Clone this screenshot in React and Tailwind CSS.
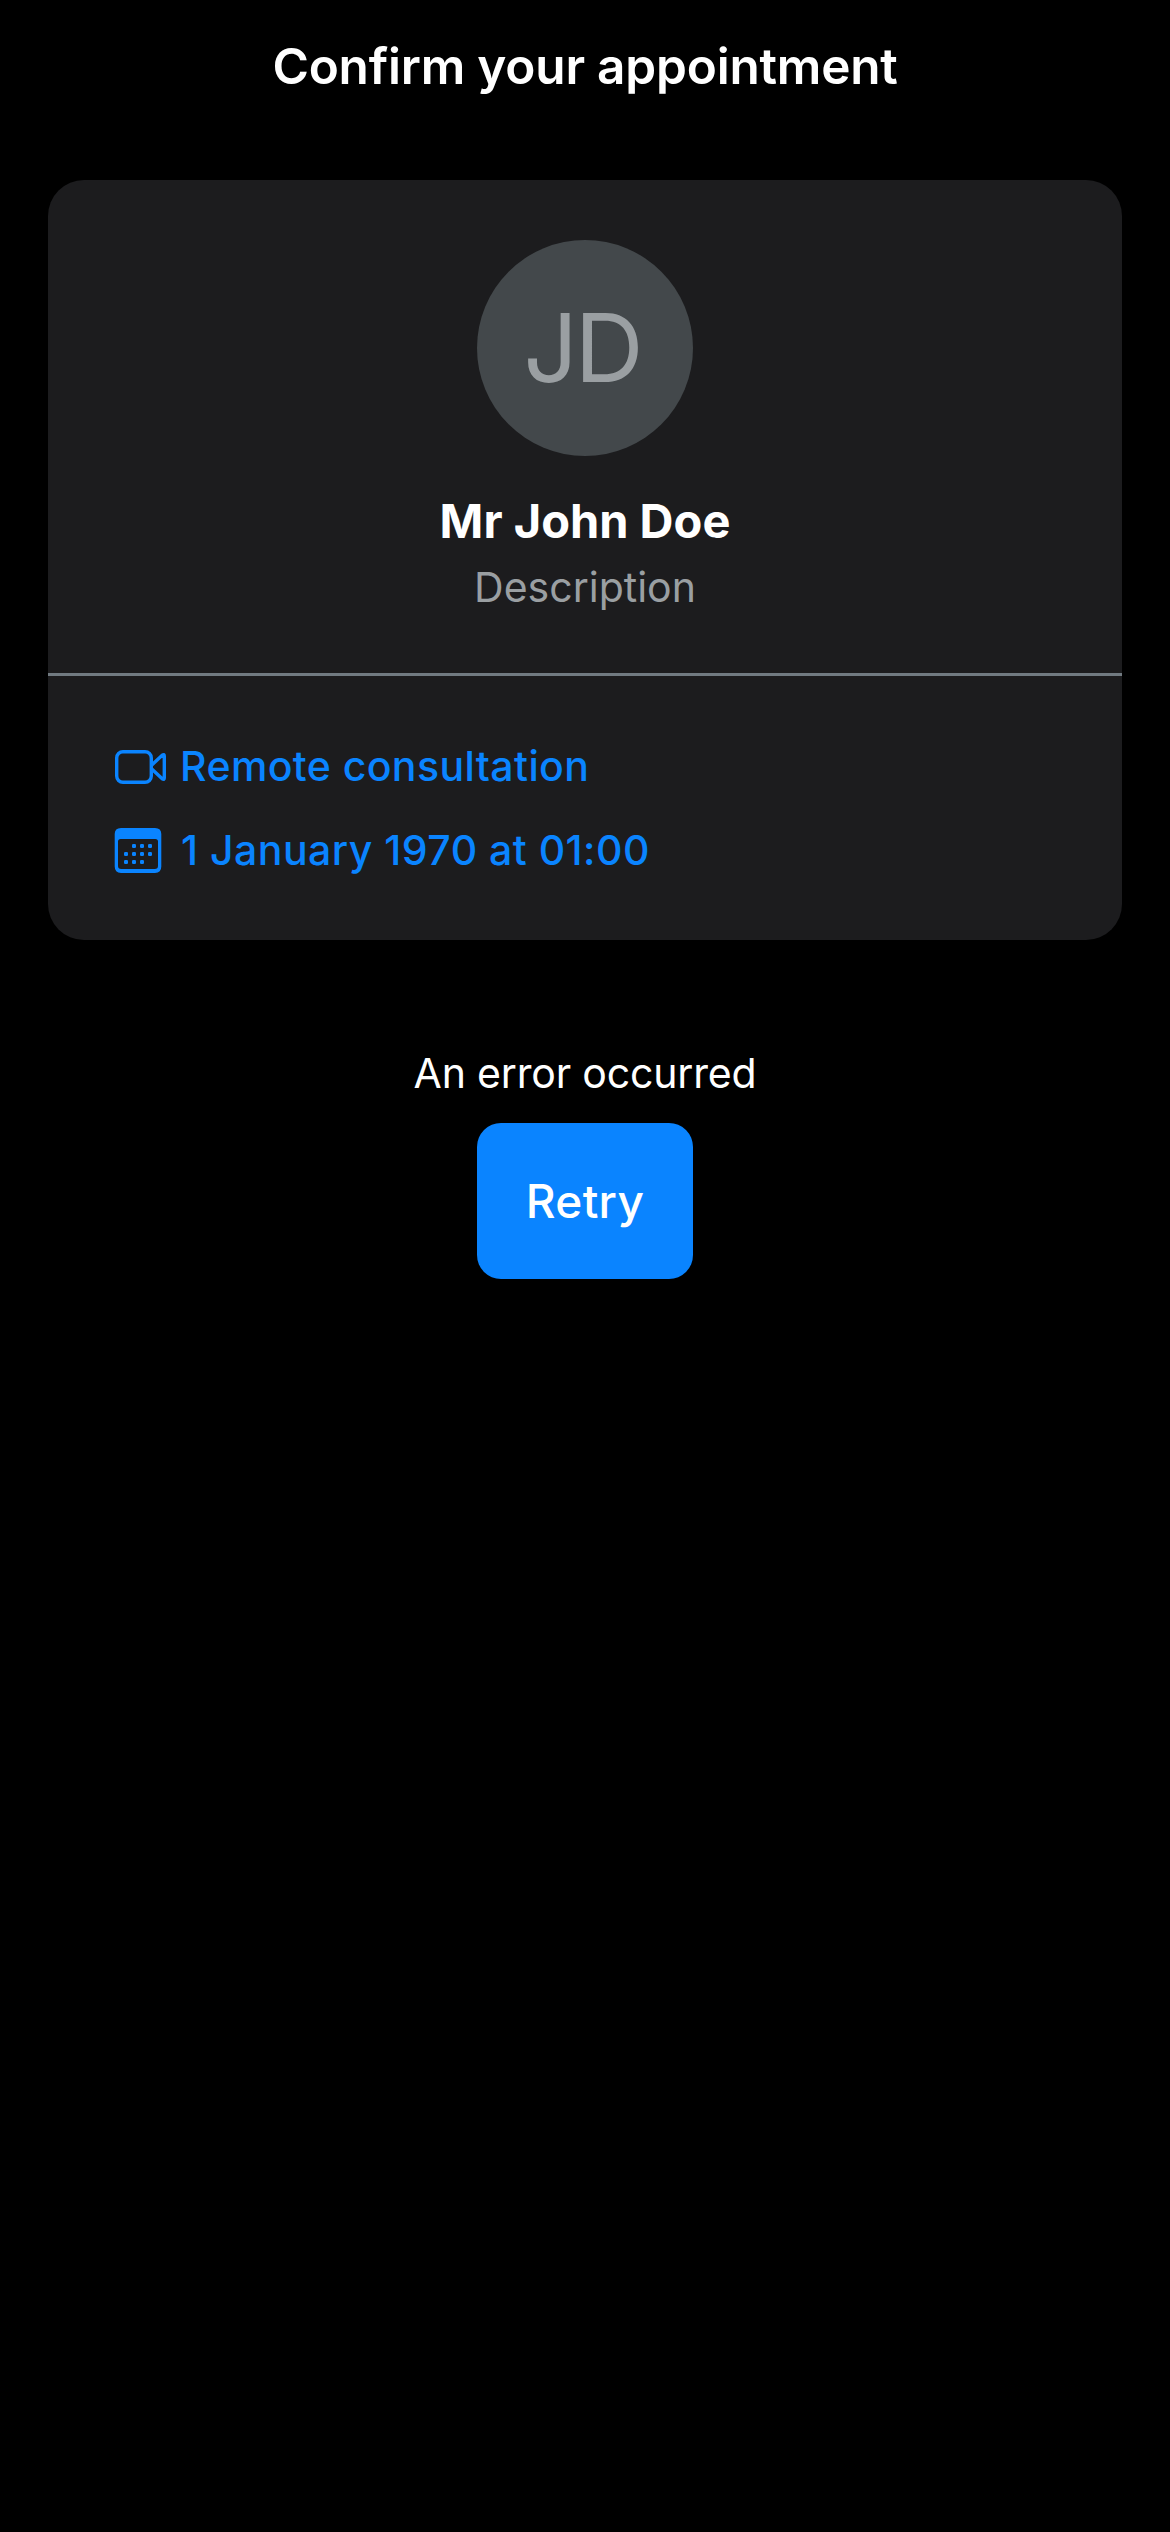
function VideoIcon() {
  return (
    <svg width="53" height="38" viewBox="0 0 53 38" fill="none" stroke="currentColor" strokeWidth="3.4" strokeLinejoin="round">
      <rect x="2.7" y="4.7" width="34.6" height="30.6" rx="6.2" />
      <path d="M37.8 18 L48.2 8.2 Q50.3 6.8 50.3 9 V31 Q50.3 33.2 48.2 31.8 L37.8 22" />
    </svg>
  );
}

const dots = [
  [20, 19], [28, 19], [36, 19],
  [12, 27], [20, 27], [28, 27], [36, 27],
  [12, 35], [20, 35], [28, 35],
];

function CalendarIcon() {
  return (
    <svg width="48" height="46" viewBox="0 0 48 46" fill="currentColor">
      <path fillRule="evenodd" d="M7 .9 H41 Q47.3 .9 47.3 7.1 V39.6 Q47.3 45.9 41 45.9 H7 Q.7 45.9 .7 39.6 V7.1 Q.7 .9 7 .9 Z M6.6 12 Q4 12 4 14.6 V38.8 Q4 42 7.2 42 H40.8 Q44 42 44 38.8 V14.6 Q44 12 41.4 12 Z" />
      {dots.map(([x, y]) => (
        <rect key={`${x}-${y}`} x={x - 2} y={y - 2} width="4" height="4" rx="1.2" />
      ))}
    </svg>
  );
}

export default function App() {
  return (
    <div className="flex h-[2532px] w-[1170px] flex-col bg-black font-['Inter',sans-serif] text-white">
      <h1 className="text-center text-[49.5px] leading-[132px] font-semibold tracking-[-0.2px]">Confirm your appointment</h1>
      <section className="mx-12 mt-12 h-[760px] rounded-[36px] bg-[#1c1c1e]">
        <div className="flex h-[493px] flex-col items-center pt-[60px]">
          <div className="flex size-[216px] items-center justify-center rounded-full bg-[#43484b] pr-[6px] text-[95.3px] leading-none tracking-[-3px] text-[#9a9fa2]">JD</div>
          <h2 className="mt-[35px] text-[47px] leading-[60px] font-bold">Mr John Doe</h2>
          <p className="mt-[11px] text-[41px] leading-[50px] text-[#9a9fa2]">Description</p>
        </div>
        <div className="h-[3px] bg-[#717a81]" />
        <div className="flex flex-col gap-[34px] pt-[65px] pl-[66px] text-[41px] leading-[50px] font-medium text-[#0a84ff]">
          <div className="flex h-[50px] items-center">
            <span className="w-[66px]"><VideoIcon /></span>
            <span className="tracking-[0.4px]">Remote consultation</span>
          </div>
          <div className="flex h-[50px] items-center">
            <span className="w-[67px]"><CalendarIcon /></span>
            <span className="tracking-[0.49px]">1 January 1970 at 01:00</span>
          </div>
        </div>
      </section>
      <div className="mt-[108px] flex flex-col items-center">
        <p className="text-[41px] leading-[50px] tracking-[-0.17px]">An error occurred</p>
        <button className="mt-[25px] h-[156px] w-[216px] rounded-[24px] bg-[#0a84ff] text-[46px] font-medium tracking-[0.3px]">Retry</button>
      </div>
    </div>
  );
}
